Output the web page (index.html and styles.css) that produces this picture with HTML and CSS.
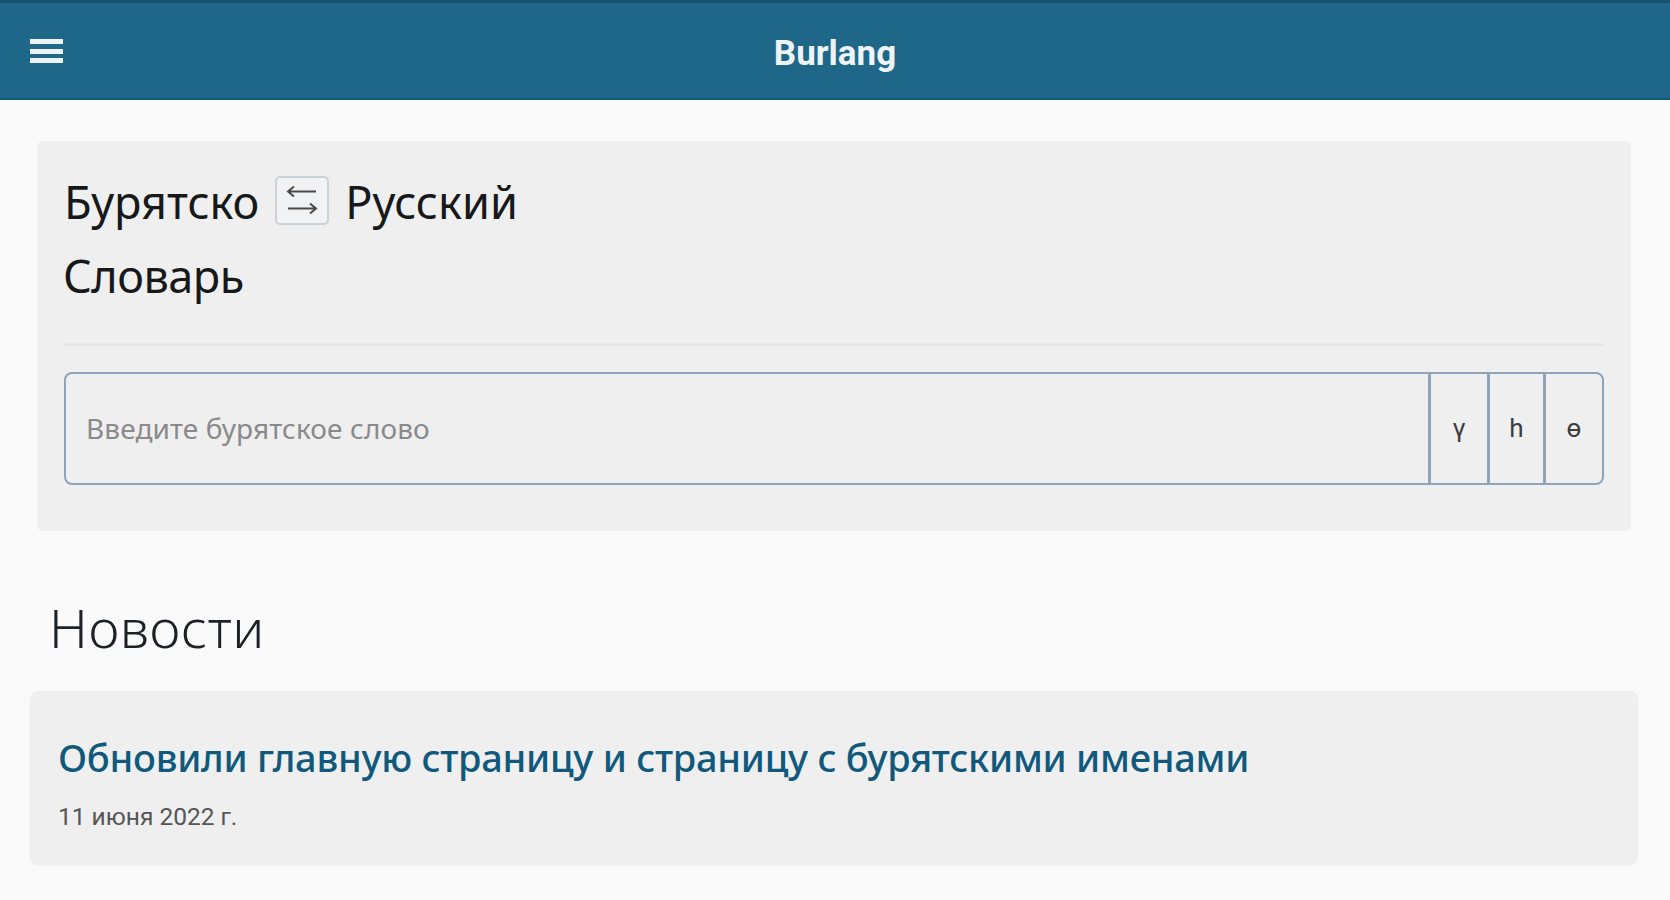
FILE: index.html
```html
<!DOCTYPE html>
<html lang="ru">
<head>
  <meta charset="UTF-8" />
  <meta name="viewport" content="width=device-width, initial-scale=1.0"/>
  <title>Burlang</title>
  <link rel="stylesheet" href="styles.css">
</head>
<body>
  <header class="topbar">
    <button class="menu-btn" aria-label="Меню">
      <span></span><span></span><span></span>
    </button>
    <div class="brand">Burlang</div>
  </header>

  <main class="page">
    <section class="search-card">
      <h2 class="lang-title">
        Бурятско
        <button class="swap-btn" aria-label="Поменять">
          <svg viewBox="0 0 36 36" width="36" height="36" fill="none" stroke="#4a4a4a" stroke-width="2">
            <path d="M32 9.5H4M10 4.5l-6 5 6 5"/>
            <path d="M4 26.5h28M26 21.5l6 5-6 5"/>
          </svg>
        </button>
        Русский
      </h2>
      <h2 class="dict-title">Словарь</h2>
      <hr class="divider">
      <div class="search-box">
        <input type="text" placeholder="Введите бурятское слово"/>
        <button class="letter letter-y">ү</button>
        <button class="letter letter-h">һ</button>
        <button class="letter letter-o">ө</button>
      </div>
    </section>

    <h1 class="news-heading">Новости</h1>

    <article class="news-card">
      <a class="news-link" href="#">Обновили главную страницу и страницу с бурятскими именами</a>
      <div class="news-date">11 июня 2022 г.</div>
    </article>
  </main>
</body>
</html>
```

FILE: styles.css
```css
* {
  box-sizing: border-box;
}
body {
  margin: 0;
  background: #fafafa;
  color: #212529;
  font-family: 'Noto Sans', sans-serif;
  height: 900px;
  overflow: hidden;
}
.topbar {
  height: 100px;
  background: #1e6788;
  border-top: 3px solid #17536f;
  border-bottom: 2px solid #145a78;
  display: flex;
  align-items: center;
  justify-content: center;
  position: relative;
}
.menu-btn {
  position: absolute;
  left: 30px;
  top: 36px;
  width: 33px;
  padding: 0;
  border: none;
  background: none;
  display: flex;
  flex-direction: column;
  gap: 4.5px;
}
.menu-btn span {
  display: block;
  height: 5px;
  background: #eef3f6;
}
.brand {
  font-family: Roboto, sans-serif;
  font-weight: 700;
  font-size: 35px;
  color: #eef3f6;
  margin-top: 5px;
}
.page {
  padding: 41px 32px 0 30px;
}
.search-card {
  margin: 0 7px;
  height: 390px;
  padding: 25px 27px 0 27px;
  background: #efefef;
  border-radius: 6px;
}
.lang-title,
.dict-title {
  margin: 0;
  font-weight: 400;
  font-size: 45px;
  line-height: 60px;
  color: #16181a;
  display: flex;
  align-items: center;
  gap: 16px;
}
.lang-title {
  height: 72px;
}
.dict-title {
  height: 75px;
  letter-spacing: -0.5px;
  margin-left: -1px;
}
.swap-btn {
  width: 54px;
  height: 49px;
  padding: 0;
  background: #f0f2f4;
  border: 2px solid #c9d2da;
  border-radius: 5px;
  display: flex;
  align-items: center;
  justify-content: center;
  margin-top: -4px;
}
.divider {
  border: none;
  height: 3px;
  background: #e7e7e7;
  margin: 30px 0 26px;
}
.search-box {
  height: 113px;
  display: flex;
  border: 2px solid #8ea4b8;
  border-radius: 8px;
}
.search-box input {
  flex: 1;
  min-width: 0;
  height: 100%;
  border: none;
  background: none;
  padding: 0 20px 2px;
  font-family: 'Noto Sans', sans-serif;
  font-size: 28px;
  letter-spacing: 0.1px;
  outline: none;
}
.search-box input::placeholder {
  color: #8a8a8a;
  opacity: 1;
}
.letter {
  padding: 0;
  border: none;
  border-left: 3px solid #8ea4b8;
  background: none;
  font-family: Roboto, sans-serif;
  font-size: 26px;
  color: #3c3c3c;
  padding-bottom: 2px;
}
.letter-y {
  width: 59px;
}
.letter-h {
  width: 56px;
}
.letter-o {
  width: 59px;
}
.news-heading {
  margin: 0;
  padding: 62px 0 0 19px;
  height: 160px;
  font-weight: 350;
  font-size: 53.5px;
  letter-spacing: 0.6px;
  line-height: 70px;
  color: #1d2125;
}
.news-card {
  height: 173px;
  background: #efefef;
  border-radius: 8px;
  padding: 41px 28px 0 29px;
  box-shadow: 0 1px 2px rgba(0, 0, 0, 0.06);
}
.news-link {
  display: block;
  font-size: 38px;
  font-weight: 500;
  letter-spacing: -0.28px;
  line-height: 50px;
  color: #11597c;
  text-decoration: none;
  margin-left: -1px;
}
.news-date {
  margin-top: 20px;
  font-family: Roboto, sans-serif;
  font-size: 24.5px;
  line-height: 30px;
  color: #555;
  margin-left: -1px;
}
```
